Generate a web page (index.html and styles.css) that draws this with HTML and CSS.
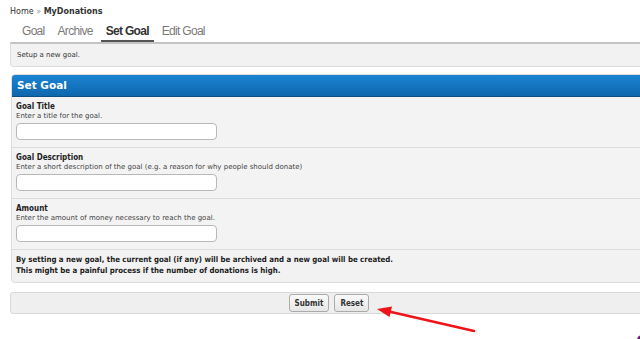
FILE: index.html
```html
<!DOCTYPE html>
<html lang="en">
<head>
    <meta charset="UTF-8">
    <title>MyDonations - Set Goal</title>
    <link rel="stylesheet" href="styles.css">
</head>
<body>
    <div class="page">
        <div class="breadcrumb">Home <span class="sep">»</span> <strong>MyDonations</strong></div>

        <ul class="tabs">
            <li>Goal</li>
            <li>Archive</li>
            <li class="active">Set Goal</li>
            <li>Edit Goal</li>
        </ul>

        <div class="intro">Setup a new goal.</div>

        <div class="panel">
            <div class="panel-head">Set Goal</div>

            <div class="row">
                <label class="row-label">Goal Title</label>
                <div class="row-desc">Enter a title for the goal.</div>
                <input type="text" class="text-input">
            </div>

            <div class="row">
                <label class="row-label">Goal Description</label>
                <div class="row-desc">Enter a short description of the goal (e.g. a reason for why people should donate)</div>
                <input type="text" class="text-input">
            </div>

            <div class="row">
                <label class="row-label">Amount</label>
                <div class="row-desc">Enter the amount of money necessary to reach the goal.</div>
                <input type="text" class="text-input">
            </div>

            <div class="note">
                By setting a new goal, the current goal (if any) will be archived and a new goal will be created.<br>
                This might be a painful process if the number of donations is high.
            </div>
        </div>

        <div class="actions">
            <button class="btn">Submit</button>
            <button class="btn">Reset</button>
        </div>
    </div>

    <!-- annotation arrow drawn over the screenshot -->
    <svg class="arrow" width="110" height="36" viewBox="0 0 110 36">
        <line x1="103" y1="31" x2="18" y2="11.5" stroke="#f0141a" stroke-width="2.5" stroke-linecap="round"/>
        <polygon points="6,9 21,6.5 18.5,17" fill="#f0141a"/>
    </svg>
    <div class="corner-blob"></div>
</body>
</html>
```

FILE: styles.css
```css
body {
    margin: 0;
    background-color: #fff;
    font-family: "DejaVu Sans", Verdana, sans-serif;
    color: #222;
    overflow: hidden;
    height: 339px;
    position: relative;
}

.page {
    width: 638px;
    padding: 0 0 0 10px;
}

.breadcrumb {
    font-size: 8px;
    color: #333;
    padding-top: 7px;
    height: 12px;
}

.breadcrumb .sep {
    color: #999;
}

.tabs {
    list-style: none;
    margin: 0;
    padding: 0 0 0 7px;
    display: flex;
    gap: 3px;
    height: 23px;
}

.tabs li {
    font-family: "Liberation Sans", Arial, sans-serif;
    font-size: 12px;
    letter-spacing: -0.7px;
    color: #7a7a7a;
    padding: 5px 5px 0;
    box-sizing: border-box;
    height: 23px;
}

.tabs li.active {
    color: #333;
    font-weight: bold;
    border-bottom: 2px solid #555;
}

.intro {
    background-color: #f2f2f2;
    border: 1px solid #ddd;
    border-top: 2px solid #c4c4c4;
    border-radius: 0 0 4px 4px;
    font-size: 7px;
    color: #333;
    padding: 7px 6px 0;
    height: 15px;
}

.panel {
    margin-top: 7px;
    margin-left: 1px;
    border: 1px solid #ddd;
    border-radius: 4px;
    background-color: #f2f2f2;
    overflow: hidden;
}

.panel-head {
    background: linear-gradient(#1a84d3, #0f67ad);
    border-bottom: 1px solid #0c4f80;
    color: #fff;
    font-size: 10.5px;
    font-weight: bold;
    padding: 0 5px;
    height: 21px;
    line-height: 21px;
}

.row {
    box-sizing: border-box;
    padding: 4px 4px 0;
    height: 51px;
    border-bottom: 1px solid #dcdcdc;
    background-color: #f3f3f3;
}

.row-label {
    display: block;
    font-family: "DejaVu Sans Condensed", "DejaVu Sans", sans-serif;
    font-size: 8px;
    font-weight: bold;
    line-height: 11px;
}

.row-desc {
    font-size: 7px;
    color: #444;
    line-height: 9px;
}

.text-input {
    display: block;
    margin-top: 2px;
    width: 201px;
    height: 17px;
    box-sizing: border-box;
    border: 1px solid #b8b8b8;
    border-radius: 4px;
    background-color: #fff;
}

.note {
    font-family: "DejaVu Sans Condensed", "DejaVu Sans", sans-serif;
    font-size: 7.8px;
    font-weight: bold;
    color: #222;
    line-height: 11px;
    padding: 4px 4px 6px;
}

.actions {
    margin-top: 9px;
    border: 1px solid #d8d8d8;
    border-radius: 3px;
    background-color: #efefef;
    height: 20px;
    display: flex;
    justify-content: center;
    align-items: center;
    gap: 5px;
}

.btn {
    font-family: "DejaVu Sans Condensed", "DejaVu Sans", sans-serif;
    font-size: 8px;
    font-weight: bold;
    color: #333;
    height: 18px;
    padding: 0 5px;
    border: 1px solid #aaa;
    border-radius: 3px;
    background: linear-gradient(#fafafa, #e6e6e6);
}

.arrow {
    position: absolute;
    left: 371px;
    top: 300px;
}

.corner-blob {
    position: absolute;
    left: 637px;
    top: 335px;
    width: 10px;
    height: 10px;
    border-radius: 50%;
    background-color: #6b1a7a;
}
```
